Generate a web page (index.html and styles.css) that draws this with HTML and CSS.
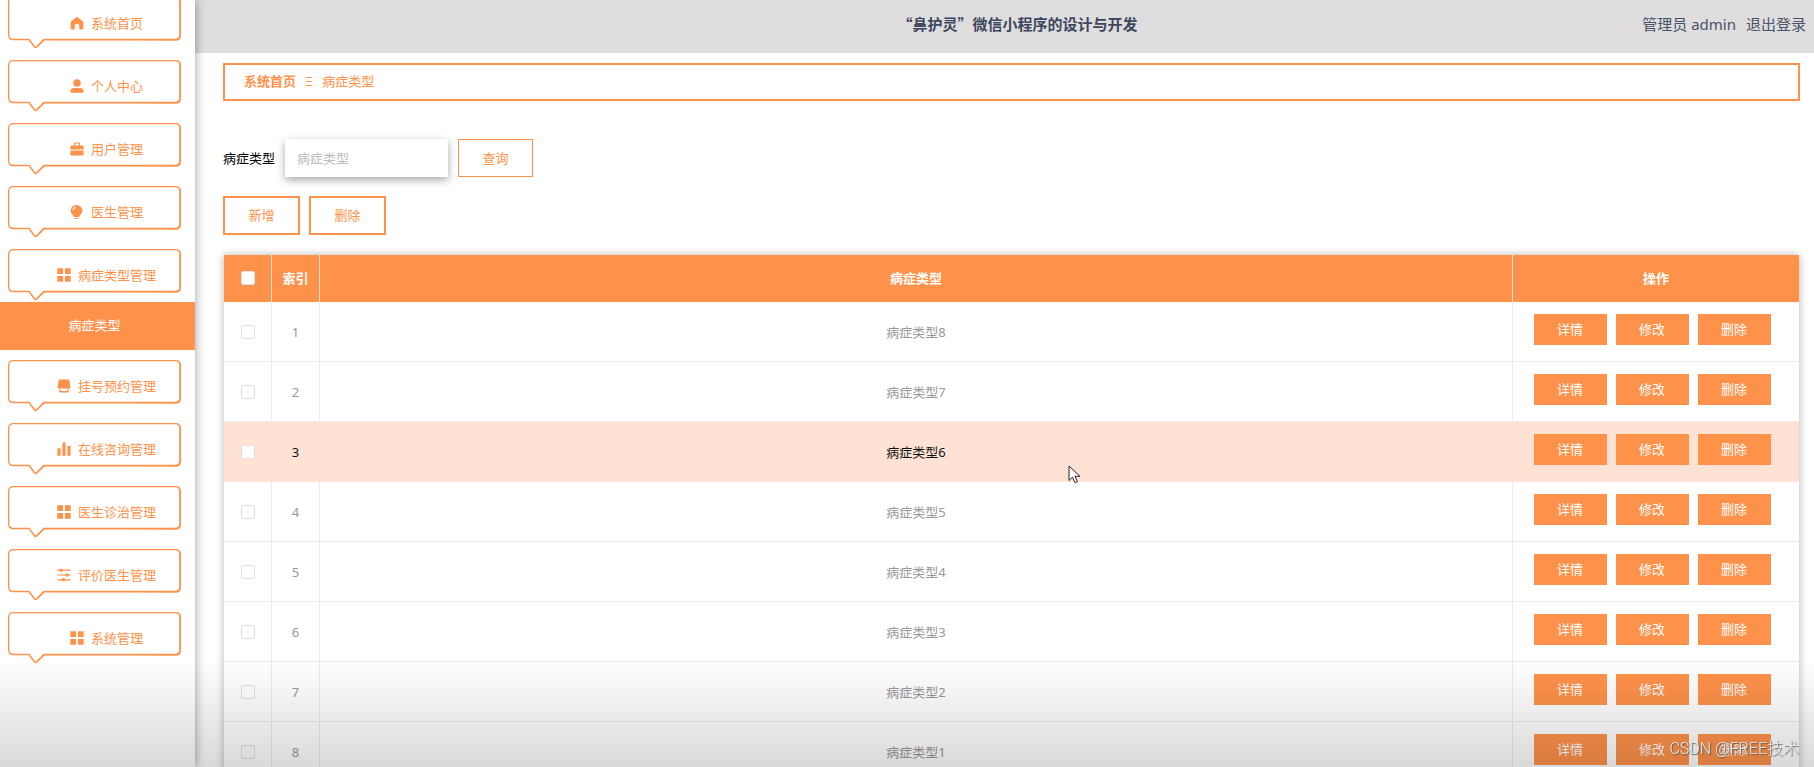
FILE: index.html
```html
<!DOCTYPE html>
<html lang="zh-CN">
<head>
<meta charset="utf-8">
<title>“鼻护灵”微信小程序的设计与开发</title>
<link rel="stylesheet" href="styles.css">
</head>
<body>
<svg class="sprite" aria-hidden="true">
  <symbol id="bubble" viewBox="0 0 173 52">
    <path fill-rule="evenodd" d="M5.5 0H167.500Q173 0 173 5.500V38.500Q173 43.800 167.500 43.800L120 43.600H36.500L29.200 50.600Q27.500 52 26 50.600L20.700 43.200H5.500Q0 43.200 0 37.700V5.500Q0 0 5.500 0ZM5.500 1.300Q1.300 1.300 1.300 5.500V37.500Q1.300 41.800 5.500 41.800H21.500L27 49.200Q27.600 49.800 28.200 49.200L35.500 41.800H167Q171.200 41.800 171.200 38V5.500Q171.200 1.300 167.500 1.300Z"/>
  </symbol>
  <symbol id="home" viewBox="0 0 14 14"><path d="M7 .8 13.300 5.800V12.600Q13.300 13.400 12.500 13.400H9.300V9.800Q9.300 7.800 7 7.800T4.700 9.800V13.400H1.500Q.7 13.400.7 12.600V5.800Z"/></symbol>
  <symbol id="user" viewBox="0 0 14 14"><circle cx="7" cy="4" r="3.800"/><path d="M.5 13.700V12Q.7 8.900 4 8.900H10Q13.300 8.900 13.500 12V13.700Z"/></symbol>
  <symbol id="case" viewBox="0 0 14 14"><path fill-rule="evenodd" d="M4 3.500V1Q4 .4 4.600.4H9.400Q10 .4 10 1V3.500H12.800Q13.600 3.500 13.600 4.300V7.500H.4V4.300Q.4 3.500 1.200 3.500ZM5.200 3.500H8.800V1.600H5.200ZM.4 8.500H13.600V13.600H.4Z"/></symbol>
  <symbol id="bulb" viewBox="0 0 14 14"><path fill-rule="evenodd" d="M6.500 0A6 6 0 0 1 12.500 6Q12.500 8 9.700 10.500L9.200 12H3.800L3.300 10.500Q.5 8 .5 6A6 6 0 0 1 6.500 0ZM2.500 5.500H3.500Q3.700 3.300 6 2.800V1.800Q2.700 2.200 2.500 5.500ZM4.300 13H8.700Q8.500 14 7.500 14H5.500Q4.500 14 4.300 13Z"/></symbol>
  <symbol id="grid" viewBox="0 0 14 14"><rect x=".3" y=".3" width="5.800" height="5.800" rx=".6"/><rect x="7.900" y=".3" width="5.800" height="5.800" rx=".6"/><rect x=".3" y="7.900" width="5.800" height="5.800" rx=".6"/><rect x="7.900" y="7.900" width="5.800" height="5.800" rx=".6"/></symbol>
  <symbol id="goods" viewBox="0 0 14 14"><path d="M1.800.6H12.200L13.400 8.500Q13.400 9.400 12.500 9.400H1.500Q.6 9.400.6 8.500ZM2 10.600H3.600L4.200 12H9.800L10.400 10.600H12L11.400 13.600H2.600Z"/></symbol>
  <symbol id="bars" viewBox="0 0 14 14"><rect x=".4" y="6.200" width="3.200" height="7.500" rx=".4"/><rect x="5.400" y=".4" width="3.200" height="13.300" rx=".4"/><rect x="10.400" y="4" width="3.200" height="9.700" rx=".4"/></symbol>
  <symbol id="sliders" viewBox="0 0 14 14"><path d="M.3 1.600H13.700V2.800H.3ZM.3 6.400H13.700V7.600H.3ZM.3 11.200H13.700V12.400H.3Z"/><circle cx="4" cy="2.200" r="1.700"/><circle cx="10" cy="7" r="1.700"/><circle cx="6.500" cy="11.800" r="1.700"/></symbol>
</svg>

<aside class="sidebar">
  <nav>
    <ul class="menu">
      <li><button class="menu-btn" type="button"><svg class="bubble"><use href="#bubble"/></svg><svg class="icon"><use href="#home"/></svg>系统首页</button></li>
      <li><button class="menu-btn" type="button"><svg class="bubble"><use href="#bubble"/></svg><svg class="icon"><use href="#user"/></svg>个人中心</button></li>
      <li><button class="menu-btn" type="button"><svg class="bubble"><use href="#bubble"/></svg><svg class="icon"><use href="#case"/></svg>用户管理</button></li>
      <li><button class="menu-btn" type="button"><svg class="bubble"><use href="#bubble"/></svg><svg class="icon"><use href="#bulb"/></svg>医生管理</button></li>
      <li><button class="menu-btn" type="button"><svg class="bubble"><use href="#bubble"/></svg><svg class="icon"><use href="#grid"/></svg>病症类型管理</button><a class="submenu" href="#">病症类型</a></li>
      <li><button class="menu-btn" type="button"><svg class="bubble"><use href="#bubble"/></svg><svg class="icon"><use href="#goods"/></svg>挂号预约管理</button></li>
      <li><button class="menu-btn" type="button"><svg class="bubble"><use href="#bubble"/></svg><svg class="icon"><use href="#bars"/></svg>在线咨询管理</button></li>
      <li><button class="menu-btn" type="button"><svg class="bubble"><use href="#bubble"/></svg><svg class="icon"><use href="#grid"/></svg>医生诊治管理</button></li>
      <li><button class="menu-btn" type="button"><svg class="bubble"><use href="#bubble"/></svg><svg class="icon"><use href="#sliders"/></svg>评价医生管理</button></li>
      <li><button class="menu-btn" type="button"><svg class="bubble"><use href="#bubble"/></svg><svg class="icon"><use href="#grid"/></svg>系统管理</button></li>
    </ul>
  </nav>
</aside>

<div class="page">
  <header class="topbar">
    <h1 class="title">“鼻护灵”微信小程序的设计与开发</h1>
    <div class="account"><span>管理员 admin</span><a class="logout" href="#">退出登录</a></div>
  </header>
  <main class="content">
    <nav class="crumbs"><a class="crumb-home" href="#">系统首页</a><span>Ξ</span><span>病症类型</span></nav>
    <form class="search">
      <label for="type">病症类型</label>
      <input class="field" id="type" type="text" placeholder="病症类型">
      <button class="btn-query" type="button">查询</button>
    </form>
    <div class="actions">
      <button class="btn-outline" type="button">新增</button>
      <button class="btn-outline" type="button">删除</button>
    </div>
    <div class="table-wrap">
    <table class="grid">
      <colgroup><col class="col-s"><col class="col-s"><col><col class="col-ops"></colgroup>
      <thead><tr><th><input class="check" type="checkbox" aria-label="全选"></th><th>索引</th><th>病症类型</th><th>操作</th></tr></thead>
      <tbody>
        <tr><td><input class="check" type="checkbox" aria-label="选择 1"></td><td>1</td><td>病症类型8</td><td><div class="ops"><button class="op" type="button">详情</button><button class="op" type="button">修改</button><button class="op" type="button">删除</button></div></td></tr>
        <tr><td><input class="check" type="checkbox" aria-label="选择 2"></td><td>2</td><td>病症类型7</td><td><div class="ops"><button class="op" type="button">详情</button><button class="op" type="button">修改</button><button class="op" type="button">删除</button></div></td></tr>
        <tr class="active"><td><input class="check" type="checkbox" aria-label="选择 3"></td><td>3</td><td>病症类型6</td><td><div class="ops"><button class="op" type="button">详情</button><button class="op" type="button">修改</button><button class="op" type="button">删除</button></div></td></tr>
        <tr><td><input class="check" type="checkbox" aria-label="选择 4"></td><td>4</td><td>病症类型5</td><td><div class="ops"><button class="op" type="button">详情</button><button class="op" type="button">修改</button><button class="op" type="button">删除</button></div></td></tr>
        <tr><td><input class="check" type="checkbox" aria-label="选择 5"></td><td>5</td><td>病症类型4</td><td><div class="ops"><button class="op" type="button">详情</button><button class="op" type="button">修改</button><button class="op" type="button">删除</button></div></td></tr>
        <tr><td><input class="check" type="checkbox" aria-label="选择 6"></td><td>6</td><td>病症类型3</td><td><div class="ops"><button class="op" type="button">详情</button><button class="op" type="button">修改</button><button class="op" type="button">删除</button></div></td></tr>
        <tr><td><input class="check" type="checkbox" aria-label="选择 7"></td><td>7</td><td>病症类型2</td><td><div class="ops"><button class="op" type="button">详情</button><button class="op" type="button">修改</button><button class="op" type="button">删除</button></div></td></tr>
        <tr><td><input class="check" type="checkbox" aria-label="选择 8"></td><td>8</td><td>病症类型1</td><td><div class="ops"><button class="op" type="button">详情</button><button class="op" type="button">修改</button><button class="op" type="button">删除</button></div></td></tr>
      </tbody>
    </table>
    </div>
  </main>
</div>

<div class="shade"></div>
<svg class="cursor" viewBox="0 0 13 19" aria-hidden="true"><path d="M1 1V15.500L4.500 12.200L7 17.800L9.400 16.700L7 11.300H12Z" fill="#fff" stroke="#2b2023"/></svg>
<div class="watermark">CSDN @FREE技术</div>
</body>
</html>
```

FILE: styles.css
```css
* {
  box-sizing: border-box;
}

body {
  display: flex;
  height: 100vh;
  margin: 0;
  overflow: hidden;
  background: #fff;
  color: #999;
  font: 13px/20px "Noto Sans", "Noto Sans CJK SC", sans-serif;
}

a {
  color: inherit;
  text-decoration: none;
}

button,
input {
  font: inherit;
}

.sprite {
  position: absolute;
  width: 0;
  height: 0;
}

/* Sidebar */
.sidebar {
  flex: none;
  z-index: 1;
  width: 195px;
  background: #fff;
  box-shadow: 0 0 10px rgba(0, 0, 0, 0.4);
}

.menu {
  display: flex;
  flex-direction: column;
  gap: 10px;
  margin: -3px 0 0;
  padding: 0;
  list-style: none;
}

.menu-btn {
  position: relative;
  display: flex;
  align-items: center;
  justify-content: center;
  gap: 7px;
  width: 173px;
  height: 53px;
  margin-left: 8px;
  padding: 0 0 2px 24px;
  border: 0;
  background: none;
  color: #ff924b;
}

.bubble {
  position: absolute;
  top: 0;
  left: 0;
  width: 173px;
  height: 52px;
  fill: #ff924b;
}

.icon {
  width: 14px;
  height: 14px;
  fill: #ff924b;
}

.submenu {
  display: block;
  padding: 13px 6px 15px 0;
  background: #ff924b;
  color: #fff;
  text-align: center;
}

/* Header */
.page {
  flex: 1;
  min-width: 0;
}

.topbar {
  display: grid;
  grid-template-columns: 1fr auto 1fr;
  align-items: center;
  height: 53px;
  padding: 0 8px 6px 34px;
  background: #dfdddd;
  color: #48536a;
  font-size: 15px;
}

.title {
  grid-column: 2;
  margin: 0;
  color: #3c475d;
  font: bold 15px/20px "Noto Sans CJK SC", sans-serif;
}

.account {
  display: flex;
  justify-content: flex-end;
  gap: 10px;
}

/* Content */
.content {
  padding: 10px 14px 0 28px;
}

.crumbs {
  display: flex;
  align-items: center;
  gap: 9px;
  height: 38px;
  padding: 0 19px 2px;
  border: 2px solid #ff924b;
  color: #ff924b;
}

.crumb-home {
  font-weight: bold;
}

.search {
  display: flex;
  align-items: center;
  gap: 10px;
  margin-top: 38px;
  color: #000;
}

.field {
  width: 163px;
  height: 38px;
  padding: 0 12px;
  border: 0;
  background: #fff;
  box-shadow: 0 3px 8px rgba(0, 0, 0, 0.35);
}

.field::placeholder {
  color: #bcbcbc;
}

.btn-query {
  width: 75px;
  height: 38px;
  padding: 0;
  border: 1px solid #ff924b;
  background: #fff;
  color: #ff924b;
}

.actions {
  display: flex;
  gap: 9px;
  margin-top: 19px;
}

.btn-outline {
  width: 77px;
  height: 39px;
  padding: 0 0 2px;
  border: 2px solid #ff924b;
  background: #fff;
  color: #ff924b;
}

/* Table */
.table-wrap {
  padding: 20px 1px 0;
}

.grid {
  width: 100%;
  border-collapse: separate;
  border-spacing: 0;
  box-shadow: 0 0 8px rgba(0, 0, 0, 0.3);
  table-layout: fixed;
  text-align: center;
}

.col-s {
  width: 48px;
}

.col-ops {
  width: 286px;
}

th {
  height: 47px;
  padding: 0 0 2px;
  border-right: 1px solid #f3e5dc;
  background: #ff924b;
  color: #fff;
}

td {
  height: 60px;
  padding: 0;
  border-right: 1px solid #ebebeb;
  border-bottom: 1px solid #ebebeb;
  background: #fff;
}

th:last-child,
td:last-child {
  border-right: 0;
}

.active td {
  border-color: #fee2d3;
  background: #fee2d3;
  color: #111;
}

.check {
  display: block;
  width: 14px;
  height: 14px;
  margin: 0 auto;
  appearance: none;
  border: 1px solid #dfdfdf;
  border-radius: 2px;
  background: #fff;
}

.ops {
  display: flex;
  justify-content: center;
  gap: 9px;
  padding: 0 8px 5px 0;
}

.op {
  width: 73px;
  height: 31px;
  padding: 0;
  border: 0;
  background: #ff924b;
  color: #fff;
}

/* Overlays */
.shade {
  position: fixed;
  right: 0;
  bottom: 0;
  left: 0;
  z-index: 2;
  height: 107px;
  background: linear-gradient(rgba(0, 0, 0, 0), rgba(0, 0, 0, 0.15));
  pointer-events: none;
}

.cursor {
  position: absolute;
  top: 465px;
  left: 1068px;
  z-index: 3;
  width: 13px;
  height: 19px;
}

.watermark {
  position: fixed;
  right: 15px;
  bottom: 8px;
  z-index: 3;
  color: #e8e8e8;
  font: 300 16px/20px Roboto, "Noto Sans CJK SC", sans-serif;
  text-shadow: 1px 1px 1px #555;
}
```
